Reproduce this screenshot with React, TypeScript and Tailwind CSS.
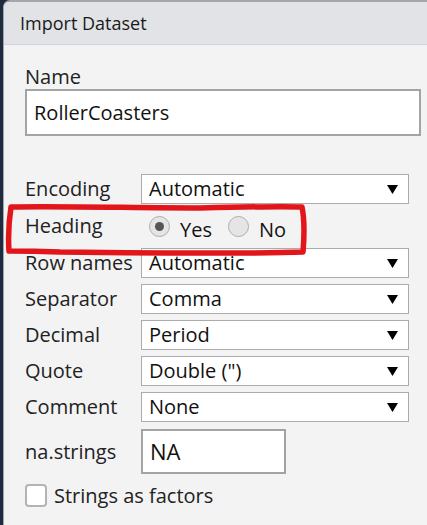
const font = { fontFamily: '"Open Sans", "Noto Sans", sans-serif' };

const Arrow = () => (
  <svg width="11" height="9" viewBox="0 0 11 9" className="shrink-0">
    <path d="M0 0 H11 L5.5 9 Z" fill="#000" />
  </svg>
);

const SelectRow = ({ label, value }: { label: string; value: string }) => (
  <div className="flex items-center h-[30px]">
    <div className="w-[116px] text-[20px] text-[#222] leading-none whitespace-nowrap">{label}</div>
    <div className="w-[268px] h-[30px] bg-white border border-[#ababab] flex items-center justify-between pl-[7px] pr-[10px]">
      <span className="text-[20px] text-[#111] leading-none">{value}</span>
      <Arrow />
    </div>
  </div>
);

const Radio = ({ checked, label }: { checked?: boolean; label: string }) => (
  <div className="flex items-center">
    <div className="w-[21px] h-[21px] rounded-full border border-[#adadad] bg-[#e5e5e5] flex items-center justify-center">
      {checked && <div className="w-[9px] h-[9px] rounded-full bg-[#555]" />}
    </div>
    <span className="ml-[10px] mt-[6px] text-[20px] text-[#111] leading-none">{label}</span>
  </div>
);

export default function App() {
  return (
    <div className="relative w-[427px] h-[525px] overflow-hidden bg-[#1d2c3e] flex" style={font}>
      <div className="w-[3px] shrink-0" />
      <div className="flex-1 flex flex-col bg-[#f3f3f3] border-l border-t-2 border-[#a4a6a9] rounded-tl-[7px] overflow-hidden">
        <div className="h-[43px] shrink-0 bg-[#e2e3e6] border-b border-[#d3d4d7] flex items-center pl-[16px]">
          <span className="text-[18px] text-[#1a1a1a] leading-none">Import Dataset</span>
        </div>
        <div className="flex flex-col pl-[21px]">
          <div className="mt-[20px] h-[24px] flex items-center text-[20px] text-[#222]">Name</div>
          <div className="w-[396px] h-[47px] bg-white border-2 border-[#a3a3a3] flex items-center pl-[7px]">
            <span className="text-[20px] text-[#111]">RollerCoasters</span>
          </div>

          <div className="mt-[38px] flex flex-col">
            <SelectRow label="Encoding" value="Automatic" />
            <div className="h-[44px] flex items-center">
              <div className="w-[124px] text-[20px] text-[#222] leading-none">Heading</div>
              <div className="flex items-center gap-[16px] mt-[1px]">
                <Radio checked label="Yes" />
                <Radio label="No" />
              </div>
            </div>
            <div className="flex flex-col gap-[6px]">
              <SelectRow label="Row names" value="Automatic" />
              <SelectRow label="Separator" value="Comma" />
              <SelectRow label="Decimal" value="Period" />
              <SelectRow label="Quote" value={'Double (")'} />
              <SelectRow label="Comment" value="None" />
            </div>
          </div>

          <div className="mt-[7px] flex items-center">
            <div className="w-[116px] text-[20px] text-[#222] leading-none">na.strings</div>
            <div className="w-[145px] h-[45px] bg-white border-2 border-[#a3a3a3] flex items-center pl-[7px]">
              <span className="text-[22px] text-[#111]">NA</span>
            </div>
          </div>

          <div className="mt-[10px] flex items-center">
            <div className="w-[22px] h-[23px] rounded-[4px] border-2 border-[#b3b3b3] bg-white" />
            <span className="ml-[7px] text-[20px] text-[#222] leading-none">Strings as factors</span>
          </div>
        </div>
      </div>

      <svg className="absolute inset-0 pointer-events-none" width="427" height="525" viewBox="0 0 427 525">
        <path
          d="M11 207 C60 206 140 208 200 208 C240 207 280 206 302 207 C305 222 304 240 303 252 C250 254 150 253 60 252 C35 251 18 251 9 251 C8 236 9 220 11 207 Z"
          fill="none"
          stroke="#e2151b"
          strokeWidth="5.5"
          strokeLinejoin="round"
        />
      </svg>
    </div>
  );
}
